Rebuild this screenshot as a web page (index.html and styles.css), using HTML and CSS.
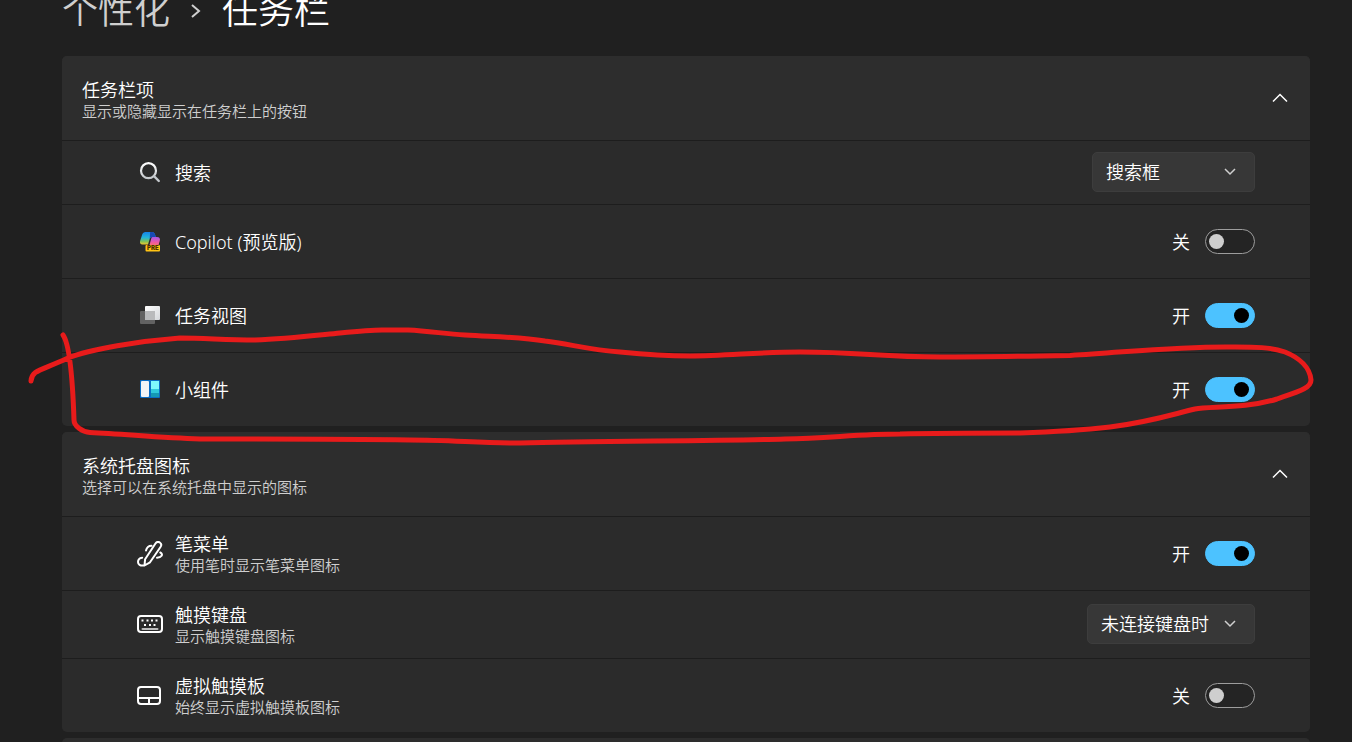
FILE: index.html
```html
<!DOCTYPE html>
<html lang="zh-CN">
<head>
<meta charset="utf-8">
<meta name="viewport" content="width=device-width, initial-scale=1">
<title>任务栏</title>
<link rel="stylesheet" href="styles.css">
</head>
<body>
<main class="page">
  <nav class="crumbs" aria-label="路径">
    <a class="crumb-link" href="#">个性化</a>
    <svg class="crumb-sep" viewBox="0 0 12 16" aria-hidden="true"><path d="M2 2l7 6-7 6"/></svg>
    <h1 class="crumb-current">任务栏</h1>
  </nav>

  <section class="card">
    <header class="card-head">
      <div class="texts">
        <h2 class="title">任务栏项</h2>
        <p class="sub">显示或隐藏显示在任务栏上的按钮</p>
      </div>
      <button class="collapse" type="button" aria-label="折叠"><svg viewBox="0 0 16 10" aria-hidden="true"><path d="M1 8.500l7-7 7 7"/></svg></button>
    </header>
    <div class="row row-short">
      <span class="icon"><svg width="22" height="22" viewBox="0 0 22 22" aria-hidden="true"><defs><linearGradient id="lens" x1="0" y1="0" x2="0" y2="1"><stop offset="0" stop-color="#fff"/><stop offset="1" stop-color="#c4c8cc"/></linearGradient></defs><circle cx="9.500" cy="8.700" r="7.500" fill="none" stroke="url(#lens)" stroke-width="2.200"/><path d="M15 14.200l4.800 4.800" stroke="#c4c8cc" stroke-width="2.400" stroke-linecap="round"/></svg></span>
      <label class="title grow" for="search">搜索</label>
      <span class="picker picker-search"><select id="search"><option>搜索框</option></select><svg viewBox="0 0 12 8" aria-hidden="true"><path d="M1 1l5 5 5-5"/></svg></span>
    </div>
    <div class="row">
      <span class="icon"><svg width="22" height="22" viewBox="0 0 22 22" aria-hidden="true">
        <defs>
          <linearGradient id="cpA" x1="0" y1="0" x2="0" y2="1"><stop offset="0" stop-color="#1683e8"/><stop offset=".45" stop-color="#22b5d8"/><stop offset=".75" stop-color="#7cc05a"/><stop offset="1" stop-color="#f2c72c"/></linearGradient>
          <linearGradient id="cpB" x1="0" y1="0" x2="0" y2="1"><stop offset="0" stop-color="#a557e8"/><stop offset=".5" stop-color="#ec58a8"/><stop offset="1" stop-color="#ff7d55"/></linearGradient>
        </defs>
        <path d="M6.500 1H13c1.800 0 2.500 1 3 2.500l.8 2.500H13c-1.200 0-2 .8-2.300 2L9 13.500H3.500c-2 0-3-1.500-2.400-3.500l2.100-6.500C3.800 2 4.800 1 6.500 1z" fill="url(#cpA)"/>
        <path d="M11.500 1H13c1.800 0 2.500 1 3 2.500l.8 2.500H13c-1.200 0-2 .8-2.300 2l.3-5C11 2 11 1 11.500 1z" fill="#1749b5"/>
        <path d="M13.500 6H18c2.400 0 3.400 1.500 2.800 3.700L19 16h-9l2.200-8.200C12.500 6.700 12.800 6 13.500 6z" fill="url(#cpB)"/>
        <rect x="6.500" y="14" width="14.500" height="6.500" rx="1" fill="#ffc414"/>
        <text class="pre" x="13.800" y="19.400" text-anchor="middle">PRE</text>
      </svg></span>
      <label class="title grow" for="copilot">Copilot (预览版)</label>
      <span class="state">关</span><input class="switch" id="copilot" type="checkbox" role="switch">
    </div>
    <div class="row">
      <span class="icon"><svg width="22" height="22" viewBox="0 0 22 22" aria-hidden="true"><defs><linearGradient id="tv" x1="0" y1="0" x2="1" y2="1"><stop offset="0" stop-color="#ffffff"/><stop offset="1" stop-color="#d4d6da"/></linearGradient></defs><rect x="6" y="1" width="15" height="14" rx="1" fill="url(#tv)"/><rect x="1" y="6" width="15" height="13" rx="1" fill="#626262"/><path d="M6 6h10v9H6z" fill="#b9babc"/></svg></span>
      <label class="title grow" for="taskview">任务视图</label>
      <span class="state">开</span><input class="switch" id="taskview" type="checkbox" role="switch" checked>
    </div>
    <div class="row">
      <span class="icon"><svg width="22" height="22" viewBox="0 0 22 22" aria-hidden="true"><rect x="1" y="1" width="20" height="18" rx="1" fill="#0a6cc4"/><rect x="2" y="2" width="8" height="16" rx="1" fill="#f3f4f6"/><path d="M12 2h8v8h-8z" fill="#7ff7fc"/><path d="M12 10h8v4h-8z" fill="#30c9dc"/><path d="M12 14h8v4h-8z" fill="#1598b4"/></svg></span>
      <label class="title grow" for="widgets">小组件</label>
      <span class="state">开</span><input class="switch" id="widgets" type="checkbox" role="switch" checked>
    </div>
  </section>

  <section class="card">
    <header class="card-head">
      <div class="texts">
        <h2 class="title">系统托盘图标</h2>
        <p class="sub">选择可以在系统托盘中显示的图标</p>
      </div>
      <button class="collapse" type="button" aria-label="折叠"><svg viewBox="0 0 16 10" aria-hidden="true"><path d="M1 8.500l7-7 7 7"/></svg></button>
    </header>
    <div class="row">
      <span class="icon"><svg class="line-icon" width="26" height="26" viewBox="0 0 26 26" aria-hidden="true"><path d="M7.500 24.500l.6-6.300L18.300 2.700c1.200-1.800 3-2.200 4.500-1.200s1.900 2.700.7 4.500L13 21.300z"/><path d="M6.500 24.500C3.300 25 1 23.500 1 21c0-2.400 1.700-4 4.200-4.300"/><path d="M9 9.500c.6-2.600 2.800-4.800 5.500-4.800"/><path d="M23.300 11.500c1.700.9 2 2.200 1.300 3.300-.8 1.200-2.500 1.900-4.600 2"/></svg></span>
      <div class="texts grow"><label class="title" for="pen">笔菜单</label><p class="sub">使用笔时显示笔菜单图标</p></div>
      <span class="state">开</span><input class="switch" id="pen" type="checkbox" role="switch" checked>
    </div>
    <div class="row row-mid">
      <span class="icon"><svg class="line-icon" width="26" height="20" viewBox="0 0 26 20" aria-hidden="true"><rect x="1" y="1" width="24" height="16" rx="3"/><path class="keys" d="M4.500 5.500h2M9.500 5.500h2M14 5.500h2M18.500 5.500h2M7 10h2M12 10h2M16.500 10h2"/><path class="space" d="M5.500 14h15"/></svg></span>
      <div class="texts grow"><label class="title" for="keyboard">触摸键盘</label><p class="sub">显示触摸键盘图标</p></div>
      <span class="picker picker-keyboard"><select id="keyboard"><option>未连接键盘时</option></select><svg viewBox="0 0 12 8" aria-hidden="true"><path d="M1 1l5 5 5-5"/></svg></span>
    </div>
    <div class="row">
      <span class="icon"><svg class="line-icon" width="26" height="20" viewBox="0 0 26 20" aria-hidden="true"><rect x="1" y="1" width="22" height="17" rx="3"/><path d="M1 12h22M12 12v6"/></svg></span>
      <div class="texts grow"><label class="title" for="touchpad">虚拟触摸板</label><p class="sub">始终显示虚拟触摸板图标</p></div>
      <span class="state">关</span><input class="switch" id="touchpad" type="checkbox" role="switch">
    </div>
  </section>

  <section class="card card-next"></section>

  <svg class="marker" viewBox="0 0 1352 742" preserveAspectRatio="none" aria-hidden="true"><path d="M31 381C32 370 40 371 68 358C90 349 140 341 180 338C205 338 225 340 255 340C285 339 310 336 340 333C360 331 370 330 382 330H408C430 331 445 334 465 335C500 337 520 337 545 341C570 344 590 350 620 352C650 355 665 356 690 356C725 356 760 352 800 352C860 352 880 357 940 357C980 357 1040 356 1070 355.500C1130 352 1180 346 1235 347C1255 347 1270 347 1285 352C1300 358 1310 368 1311 380C1311 388 1300 391 1277 399C1245 409 1210 406 1195 409C1170 415 1150 422 1110 427C1075 431 1050 432 1020 433C980 433 940 433 900 434C860 434 830 438 785 439C720 441 600 441 520 443C480 443 450 440 410 440C340 439 280 439 200 439C160 438 125 434 90 432.500C82 432 74 426 74 420C73 390 71 346 63 335"/></svg>
</main>
</body>
</html>
```

FILE: styles.css
```css
* { box-sizing: border-box; }

body {
  margin: 0;
  background: #202020;
  color: #fff;
  font-family: "Noto Sans", "Noto Sans CJK SC", sans-serif;
  font-weight: 350;
}

h1, h2, p { margin: 0; font-weight: inherit; }

.page {
  position: relative;
  height: 100vh;
  overflow: hidden;
  padding: 0 42px 0 62px;
  display: flex;
  flex-direction: column;
  gap: 6px;
}

.crumbs {
  flex: none;
  height: 50px;
  display: flex;
  align-items: flex-end;
  gap: 20px;
  padding-bottom: 15px;
  font-size: 36px;
  line-height: 48px;
}
.crumb-link { color: #cfcfcf; text-decoration: none; }
.crumb-current { font-size: 36px; }
.crumb-sep { width: 12px; height: 16px; margin-bottom: 16px; fill: none; stroke: #cfcfcf; stroke-width: 2; }

.card {
  flex: none;
  border-radius: 5px;
  background: #2b2b2b;
  overflow: hidden;
}
.card-next { height: 60px; background: #2d2d2d; }

.card-head {
  height: 84px;
  display: flex;
  align-items: center;
  justify-content: space-between;
  padding: 4px 20px 0;
  background: #2d2d2d;
}

.collapse {
  display: grid;
  place-items: start center;
  width: 20px;
  height: 20px;
  padding: 3px 0 0;
  border: 0;
  background: none;
}
.collapse svg { width: 16px; height: 10px; fill: none; stroke: #fff; stroke-width: 1.5; }

.row {
  height: 74px;
  display: flex;
  align-items: center;
  padding: 0 55px 0 75px;
  border-top: 1px solid #1d1d1d;
}
.row-short { height: 64px; }
.row-mid { height: 68px; }

.icon { flex: none; width: 26px; margin-right: 12px; display: grid; place-items: center; }
.line-icon { fill: none; stroke: #fff; stroke-width: 2; stroke-linecap: round; stroke-linejoin: round; }
.keys { stroke-linecap: butt; }
.space { stroke: #bdbdbd; }
.pre { font: 900 6px Inter, sans-serif; fill: #4a3000; }

.grow { flex: 1; }
.texts { display: flex; flex-direction: column; }
.title { font-size: 18px; line-height: 22px; }
.sub { font-size: 15px; line-height: 20px; color: #cfcfcf; }
.state { font-size: 18px; line-height: 22px; margin-right: 15px; }

.switch {
  appearance: none;
  flex: none;
  display: flex;
  align-items: center;
  width: 50px;
  height: 25px;
  margin: 0;
  padding: 0 3px;
  border: 1px solid #9d9d9d;
  border-radius: 13px;
  background: #242424;
}
.switch::before { content: ""; width: 15px; height: 15px; border-radius: 50%; background: #cecece; }
.switch:checked { justify-content: flex-end; padding-right: 5px; border-color: #4cc2ff; background: #4cc2ff; }
.switch:checked::before { background: #000; }

.picker { flex: none; display: grid; align-items: center; height: 40px; margin-bottom: 2px; }
.picker > * { grid-area: 1 / 1; }
.picker select {
  appearance: none;
  width: 100%;
  height: 40px;
  padding: 0 13px;
  border: 1px solid #3d3d3d;
  border-radius: 5px;
  background: #373737;
  color: #fff;
  font: inherit;
  font-size: 18px;
}
.picker svg { justify-self: end; width: 12px; height: 8px; margin-right: 19px; fill: none; stroke: #cfcfcf; stroke-width: 1.5; pointer-events: none; }
.picker-search { width: 163px; }
.picker-keyboard { width: 168px; }

.marker { position: absolute; top: 0; left: 0; width: 100%; height: 742px; pointer-events: none; }
.marker path { fill: none; stroke: #e81b1b; stroke-width: 5; stroke-linecap: round; stroke-linejoin: round; }
```
